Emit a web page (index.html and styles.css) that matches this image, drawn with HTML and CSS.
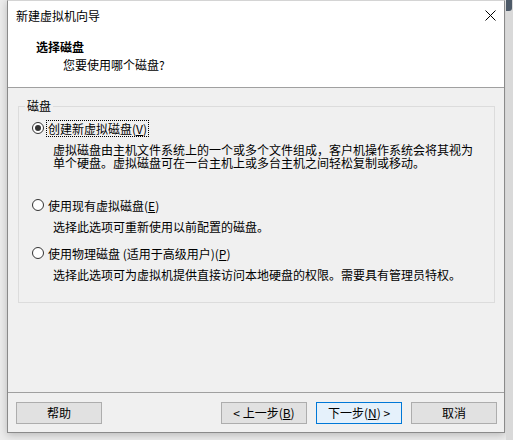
FILE: index.html
```html
<!DOCTYPE html>
<html lang="zh-CN">
<head>
<meta charset="utf-8">
<title>新建虚拟机向导</title>
<link rel="stylesheet" href="styles.css">
</head>
<body>
<div class="screen">
  <div class="window">
    <div class="titlebar">
      <span class="title">新建虚拟机向导</span>
      <span class="close" aria-label="关闭">
        <svg width="11" height="11" viewBox="0 0 11 11"><path d="M0.5 0.5 L10.5 10.5 M10.5 0.5 L0.5 10.5" stroke="#000" stroke-width="1" fill="none"/></svg>
      </span>
    </div>
    <div class="header">
      <div class="h-title">选择磁盘</div>
      <div class="h-sub">您要使用哪个磁盘?</div>
    </div>
    <div class="body">
      <fieldset class="group">
        <legend>磁盘</legend>
        <div class="options">
          <div class="option">
            <div class="radio-row">
              <span class="radio checked"></span>
              <span class="label focus">创建新虚拟磁盘(<u>V</u>)</span>
            </div>
            <div class="desc tall">虚拟磁盘由主机文件系统上的一个或多个文件组成，客户机操作系统会将其视为单个硬盘。虚拟磁盘可在一台主机上或多台主机之间轻松复制或移动。</div>
          </div>
          <div class="option">
            <div class="radio-row">
              <span class="radio"></span>
              <span class="label">使用现有虚拟磁盘(<u>E</u>)</span>
            </div>
            <div class="desc">选择此选项可重新使用以前配置的磁盘。</div>
          </div>
          <div class="option">
            <div class="radio-row">
              <span class="radio"></span>
              <span class="label">使用物理磁盘 (适用于高级用户)(<u>P</u>)</span>
            </div>
            <div class="desc">选择此选项可为虚拟机提供直接访问本地硬盘的权限。需要具有管理员特权。</div>
          </div>
        </div>
      </fieldset>
    </div>
    <div class="footer">
      <button class="btn">帮助</button>
      <div class="spacer"></div>
      <div class="nav">
        <button class="btn">&lt; 上一步(<u>B</u>)</button>
        <button class="btn default">下一步(<u>N</u>) &gt;</button>
        <button class="btn">取消</button>
      </div>
    </div>
  </div>
  <div class="desk">
    <div class="desk-icon"></div>
  </div>
</div>
</body>
</html>
```

FILE: styles.css
```css
* { box-sizing: border-box; }

html, body {
  margin: 0;
  padding: 0;
}

body {
  background: #ececec;
  font-family: "Noto Sans CJK SC", "Microsoft YaHei", "Noto Sans", sans-serif;
  font-size: 12px;
  color: #000;
  width: 513px;
  height: 440px;
  overflow: hidden;
}

.screen {
  display: flex;
  padding-left: 7px;
  height: 440px;
}

.window {
  width: 498px;
  height: 433px;
  display: flex;
  flex-direction: column;
  background: #f0f0f0;
  border: 1px solid #8a8a8a;
  border-top-color: #d4d4d4;
  box-shadow: 0 2px 8px rgba(0, 0, 0, 0.22);
  flex-shrink: 0;
}

.titlebar {
  height: 29px;
  background: #fff;
  display: flex;
  align-items: center;
  justify-content: space-between;
  padding: 0 8px 0 8px;
}

.title {
  line-height: 16px;
}

.close {
  display: flex;
  width: 11px;
  height: 11px;
  margin-right: 0;
  margin-top: 0;
}

.header {
  height: 58px;
  background: #fff;
  border-bottom: 1px solid #a0a0a0;
  padding: 9px 0 0 28px;
}

.h-title {
  font-weight: bold;
  line-height: 16px;
}

.h-sub {
  line-height: 16px;
  margin-top: 2px;
  padding-left: 27px;
}

.body {
  height: 304px;
  padding: 10px 9px 0 10px;
}

.group {
  margin: 0;
  padding: 0;
  border: 1px solid #dcdcdc;
  min-width: 0;
}

.group legend {
  margin-left: 6px;
  padding: 0 2px;
  line-height: 16px;
}

.options {
  padding: 6px 0 21px 13px;
}

.option + .option {
  margin-top: 12px;
}

.radio-row {
  display: flex;
  align-items: center;
  height: 16px;
}

.radio {
  width: 12px;
  height: 12px;
  border-radius: 50%;
  border: 1px solid #333;
  background: #fff;
  display: flex;
  align-items: center;
  justify-content: center;
  flex-shrink: 0;
}

.radio.checked::after {
  content: "";
  width: 6px;
  height: 6px;
  border-radius: 50%;
  background: #333;
}

.label {
  margin-left: 4px;
  line-height: 15px;
  padding: 0 1px 0 0;
}

.label.focus {
  outline: 1px dotted #000;
  outline-offset: 0;
  margin-left: 3px;
  padding-left: 1px;
}

u {
  text-decoration: underline;
  text-underline-offset: 1px;
}

.desc {
  margin-top: 7px;
  padding-left: 21px;
  padding-right: 14px;
  line-height: 13px;
}

.desc.tall {
  min-height: 42px;
}

.footer {
  height: 40px;
  border-top: 1px solid #a0a0a0;
  display: flex;
  align-items: flex-start;
  padding: 9px 7px 0 8px;
}

.spacer {
  flex: 1;
}

.nav {
  display: flex;
  gap: 9px;
}

.btn {
  width: 86px;
  height: 22px;
  margin: 0;
  padding: 0;
  font: inherit;
  line-height: 16px;
  color: #000;
  background: #e1e1e1;
  border: 1px solid #adadad;
  border-radius: 0;
}

.btn.default {
  background: #e5f1fb;
  border-color: #0078d7;
}

.desk {
  flex: 1;
  margin-left: 1px;
  background: #d9d9d9;
  height: 440px;
}

.desk-icon {
  height: 11px;
  width: 6px;
  background: #4d5a68;
  border-radius: 0 0 3px 0;
}
```
